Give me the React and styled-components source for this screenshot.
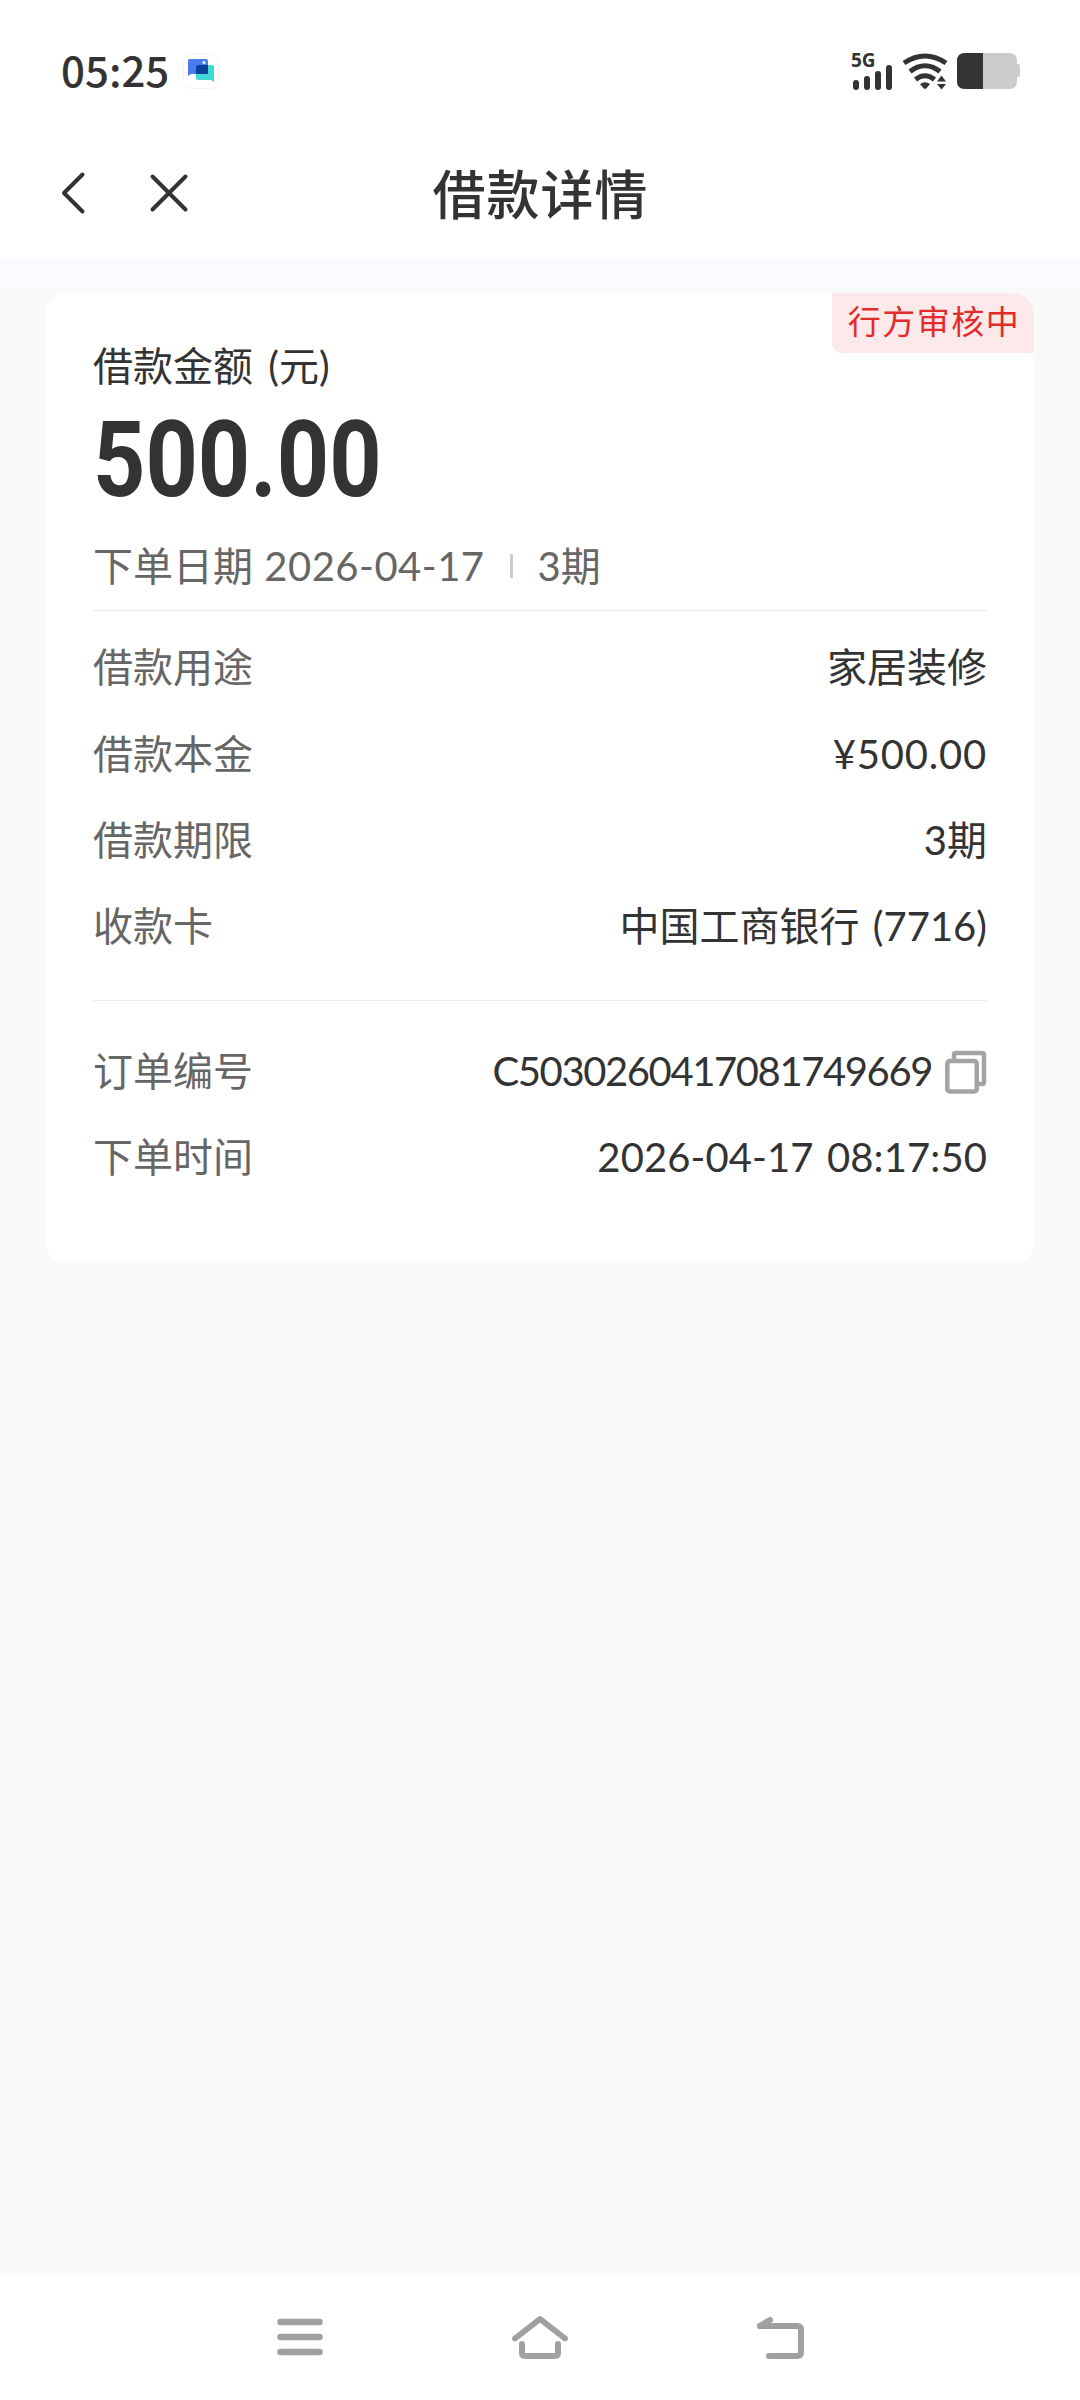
import { createGlobalStyle, styled } from "styled-components";

const GlobalStyle = createGlobalStyle`
  * {
    box-sizing: border-box;
  }

  body {
    margin: 0;
    background: #f9f9f9;
    color: #333;
    font-family: Lato, "Noto Sans CJK SC", sans-serif;
  }
`;

const Page = styled.div`
  width: 1080px;
  height: 2400px;
  display: flex;
  flex-direction: column;
`;

const StatusBar = styled.header`
  height: 140px;
  padding: 0 59px 0 61px;
  display: flex;
  align-items: center;
  justify-content: space-between;
  background: #fff;
`;

const StatusLeft = styled.div`
  padding-top: 2px;
  display: flex;
  align-items: center;
  gap: 14px;
`;

const StatusRight = styled.div`
  padding-top: 2px;
  display: flex;
  align-items: center;
  gap: 9px;
`;

const Clock = styled.span`
  height: 60px;
  font-family: "Noto Sans CJK SC", sans-serif;
  font-size: 42px;
  font-weight: 500;
  line-height: 55px;
`;

const Signal = styled.div`
  height: 37px;
  margin-right: 1px;
  display: flex;
  flex-direction: column;
  justify-content: space-between;
  font-family: "Noto Sans", sans-serif;
  font-size: 19px;
  font-weight: 700;
  line-height: 15px;
`;

const SignalBars = styled.div`
  margin-top: -4px;
  padding-left: 2px;
  display: flex;
  align-items: flex-end;
  gap: 5px;
`;

const SignalBar = styled.i`
  width: 6px;
  height: ${(props) => props.$height}px;
  border-radius: 3px;
  background: #333;
`;

const TitleBar = styled.div`
  height: 118px;
  padding: 0 60px;
  display: grid;
  grid-template-columns: 1fr auto 1fr;
  align-items: center;
  background: #fff;
`;

const TitleButtons = styled.div`
  height: 106px;
  display: flex;
  align-items: center;
  gap: 62px;
  align-self: start;
`;

const Title = styled.h1`
  margin: 0;
  align-self: start;
  font-size: 53px;
  font-weight: 500;
  letter-spacing: 1px;
  text-indent: 1px;
  line-height: 109px;
`;

const Content = styled.main`
  flex: 1;
  padding: 35px 46px 0;
  background: linear-gradient(#fafbff 30px, #f9f9f9 30px);
`;

const Card = styled.section`
  height: 970px;
  border-radius: 20px;
  background: #fff;
  overflow: hidden;
`;

const TagLine = styled.div`
  height: 43px;
  display: flex;
  justify-content: flex-end;
`;

const Tag = styled.span`
  width: 202px;
  height: 60px;
  flex: none;
  border-radius: 0 20px 0 10px;
  background: #fde9e9;
  color: #e22b2b;
  font-size: 33px;
  letter-spacing: 1.5px;
  line-height: 57px;
  text-align: center;
  text-indent: 2px;
`;

const CardBody = styled.div`
  padding: 0 47px;
`;

const AmountLabel = styled.div`
  font-size: 40px;
  line-height: 60px;
  word-spacing: 5px;
`;

const Amount = styled.div`
  height: 112px;
  padding-top: 9px;
  font-family: Roboto, sans-serif;
  font-size: 105px;
  font-weight: 700;
  line-height: 112px;
  transform: scaleX(0.87);
  transform-origin: left;
`;

const Summary = styled.div`
  height: 58px;
  margin-top: 28px;
  padding-bottom: 3px;
  display: flex;
  align-items: center;
  color: #666;
  font-size: 40px;
  word-spacing: 1px;
`;

const SummaryDate = styled.span`
  letter-spacing: 0.5px;
`;

const SummaryBar = styled.i`
  width: 3px;
  height: 24px;
  margin: 5px 25px 0 25px;
  background: #ccc;
`;

const Divider = styled.hr`
  height: 1px;
  margin: ${(props) => props.$margin};
  border: 0;
  background: #ebebeb;
`;

const Row = styled.div`
  height: 86.4px;
  padding-bottom: 2px;
  display: flex;
  align-items: center;
  justify-content: space-between;
  font-size: 40px;
  line-height: 60px;
`;

const RowLabel = styled.span`
  color: #666;
`;

const RowValue = styled.span`
  display: flex;
  align-items: center;
  gap: 13px;
  white-space: pre;
  letter-spacing: ${(props) => props.$spacing || "0"};
  word-spacing: 3px;

  svg {
    margin-top: 3px;
  }
`;

const NavBar = styled.nav`
  height: 127px;
  padding: 0 273px 0 275px;
  display: flex;
  align-items: center;
  justify-content: space-between;
  background: #fff;
`;

const loanRows = [
  { label: "借款用途", value: "家居装修" },
  { label: "借款本金", value: "¥500.00", spacing: "0.8px" },
  { label: "借款期限", value: "3期" },
  { label: "收款卡", value: "中国工商银行 (7716)" },
];

const orderRows = [
  {
    label: "订单编号",
    value: "C5030260417081749669",
    copy: true,
    spacing: "-1.4px",
  },
  { label: "下单时间", value: "2026-04-17 08:17:50", spacing: "0.1px" },
];

function AppIcon() {
  return (
    <svg width="36" height="36" viewBox="0 0 36 36">
      <rect x=".5" y=".5" width="35" height="35" rx="8" fill="#fff" stroke="#f3f3f3" />
      <path d="M6 6h17a2 2 0 0 1 2 2v13H8l-3 2V8q0-2 1-2z" fill="#4b7bec" />
      <path d="M15 12h14q2 0 2 2v15l-3-2H15q-2 0-2-2V14q0-2 2-2z" fill="#3fd8d4" />
      <path d="M15 12h10v9H13v-7q0-2 2-2z" fill="#0b4299" />
      <circle cx="21" cy="9.500" r="1.500" fill="#dff" />
    </svg>
  );
}

function WifiIcon() {
  return (
    <svg width="46" height="38" viewBox="0 0 46 38" fill="none" stroke="#333" strokeWidth="5">
      <path d="M2 11Q23-3 44 11" />
      <path d="M8 19.500Q23 8 38 19.500" />
      <path d="M13.500 27.500Q23 20 32.500 27.500" />
      <path d="M18 32q5-3.500 10 0l-3.500 4.200q-1.500 1.300-3 0z" fill="#333" stroke="none" />
      <path d="M35 29.500l4.500-6 4.500 6zM35 32h9l-4.500 5.500z" fill="#333" stroke="none" />
    </svg>
  );
}

function BatteryIcon() {
  return (
    <svg width="64" height="36" viewBox="0 0 64 36">
      <path d="M8 0h44q8 0 8 8v3h1q2 0 2 2v9q0 2-2 2h-1v4q0 8-8 8H8q-8 0-8-8V8q0-8 8-8z" fill="#cbcbcb" />
      <path d="M8 0h18v36H8q-8 0-8-8V8q0-8 8-8z" fill="#333" />
    </svg>
  );
}

function CopyIcon() {
  return (
    <svg width="42" height="44" viewBox="0 0 42 44" fill="none" stroke="#a3a3a3" strokeWidth="4.500">
      <path d="M9 10V5q0-2 2-2h26q2 0 2 2v27q0 2-2 2h-5" />
      <rect x="2.300" y="11" width="29.500" height="30.500" rx="2.500" />
    </svg>
  );
}

function DetailRow({ label, value, copy, spacing }) {
  return (
    <Row>
      <RowLabel>{label}</RowLabel>
      <RowValue $spacing={spacing}>
        {value}
        {copy && <CopyIcon />}
      </RowValue>
    </Row>
  );
}

function App() {
  return (
    <>
      <GlobalStyle />
      <Page>
        <StatusBar>
          <StatusLeft>
            <Clock>05:25</Clock>
            <AppIcon />
          </StatusLeft>
          <StatusRight>
            <Signal>
              5G
              <SignalBars>
                <SignalBar $height={10} />
                <SignalBar $height={14} />
                <SignalBar $height={19} />
                <SignalBar $height={25} />
              </SignalBars>
            </Signal>
            <WifiIcon />
            <BatteryIcon />
          </StatusRight>
        </StatusBar>

        <TitleBar>
          <TitleButtons>
            <svg width="27" height="44" viewBox="0 0 27 44" fill="none" stroke="#333" strokeWidth="4" strokeLinecap="round" strokeLinejoin="round">
              <path d="M22.500 3.500L4 22l18.500 18.500" />
            </svg>
            <svg width="40" height="40" viewBox="0 0 40 40" fill="none" stroke="#333" strokeWidth="4" strokeLinecap="round">
              <path d="M3.500 3.500l33 33M36.500 3.500l-33 33" />
            </svg>
          </TitleButtons>
          <Title>借款详情</Title>
        </TitleBar>

        <Content>
          <Card>
            <TagLine>
              <Tag>行方审核中</Tag>
            </TagLine>
            <CardBody>
              <AmountLabel>借款金额 (元)</AmountLabel>
              <Amount>500.00</Amount>
              <Summary>
                <span>
                  下单日期 <SummaryDate>2026-04-17</SummaryDate>
                </span>
                <SummaryBar />
                <span>3期</span>
              </Summary>
              <Divider $margin="16px 0 14px" />
              {loanRows.map((row) => (
                <DetailRow key={row.label} {...row} />
              ))}
              <Divider $margin="29px 0 28px" />
              {orderRows.map((row) => (
                <DetailRow key={row.label} {...row} />
              ))}
            </CardBody>
          </Card>
        </Content>

        <NavBar>
          <svg width="50" height="44" viewBox="0 0 50 44" stroke="#a0a0a0" strokeWidth="6.500" strokeLinecap="round">
            <path d="M5.500 7h39M5.500 22h39M5.500 37h39" />
          </svg>
          <svg width="60" height="46" viewBox="0 0 60 46" fill="none" stroke="#a0a0a0" strokeWidth="6" strokeLinecap="round" strokeLinejoin="round">
            <path d="M5 24.500L30 5l25 19.500" />
            <path d="M12 30v9q0 3 4 3h28q4 0 4-3v-9" />
          </svg>
          <svg width="52" height="46" viewBox="0 0 52 46" fill="none" stroke="#a0a0a0" strokeWidth="6" strokeLinecap="round" strokeLinejoin="round">
            <path d="M5 12h37q4 0 4 4v22q0 4-4 4H14" />
            <path d="M5 12L15 6" />
          </svg>
        </NavBar>
      </Page>
    </>
  );
}

export default App;
